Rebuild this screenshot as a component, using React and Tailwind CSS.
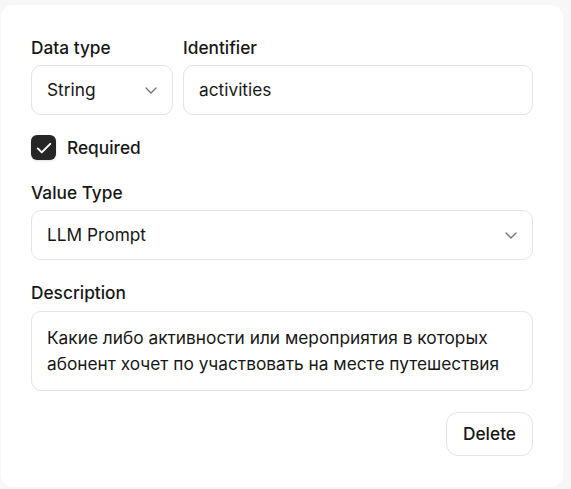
const ChevronIcon = () => (
  <svg width="12" height="7" viewBox="0 0 12 7" fill="none" className="shrink-0">
    <path d="M1 1l5 5 5-5" stroke="#707070" strokeWidth="1.3" strokeLinecap="round" strokeLinejoin="round" />
  </svg>
);

const Label = ({ children, className = '' }) => (
  <div className={`h-6 leading-6 text-[17.3px] font-medium text-[#171717] ${className}`}>{children}</div>
);

export default function App() {
  return (
    <div
      className="w-[571px] h-[489px] bg-[#f7f7f7] pt-[5px] pl-[1px]"
      style={{ fontFamily: 'Inter, "Noto Sans", sans-serif' }}
    >
      <div className="w-[562px] h-[482px] bg-white rounded-xl px-[30px] pt-[31px] flex flex-col">
        {/* Data type + identifier */}
        <div className="flex gap-[10px]">
          <div className="w-[142px]">
            <Label className="mb-[5px]">Data type</Label>
            <div className="h-[50px] rounded-[10px] border border-[#e5e5e5] flex items-center justify-between pl-[15px] pr-[15px] text-[17.3px] text-[#171717]">
              <span>String</span>
              <ChevronIcon />
            </div>
          </div>
          <div className="flex-1">
            <Label className="mb-[5px]">Identifier</Label>
            <div className="h-[50px] rounded-[10px] border border-[#e5e5e5] flex items-center px-[15px] text-[17.3px] text-[#171717]">
              activities
            </div>
          </div>
        </div>

        {/* Required */}
        <div className="flex items-center gap-[11px] mt-5 h-[25px]">
          <div className="w-[25px] h-[25px] rounded-md bg-[#262626] shadow-sm flex items-center justify-center">
            <svg width="20" height="20" viewBox="0 0 24 24" fill="none">
              <path d="M4.5 12.5l4.8 4.8L19.5 7" stroke="white" strokeWidth="2.3" strokeLinecap="round" strokeLinejoin="round" />
            </svg>
          </div>
          <span className="text-[17.3px] font-medium text-[#171717]">Required</span>
        </div>

        {/* Value type */}
        <div className="mt-[21px]">
          <Label className="mb-[5px]">Value Type</Label>
          <div className="h-[50px] rounded-[10px] border border-[#e5e5e5] flex items-center justify-between pl-[15px] pr-[15px] text-[17.3px] text-[#171717]">
            <span>LLM Prompt</span>
            <ChevronIcon />
          </div>
        </div>

        {/* Description */}
        <div className="mt-[21px]">
          <Label className="mb-[6px]">Description</Label>
          <div className="h-[80px] rounded-[10px] border border-[#e5e5e5] px-[15px] pt-[13px] text-[17.3px] leading-[26px] text-[#171717]">
            Какие либо активности или мероприятия в которых абонент хочет по участвовать на месте путешествия
          </div>
        </div>

        <div className="flex justify-end mt-[21px]">
          <button className="h-[44px] px-4 rounded-xl border border-[#e5e5e5] bg-white text-[17.3px] font-medium text-[#171717]">
            Delete
          </button>
        </div>
      </div>
    </div>
  );
}
